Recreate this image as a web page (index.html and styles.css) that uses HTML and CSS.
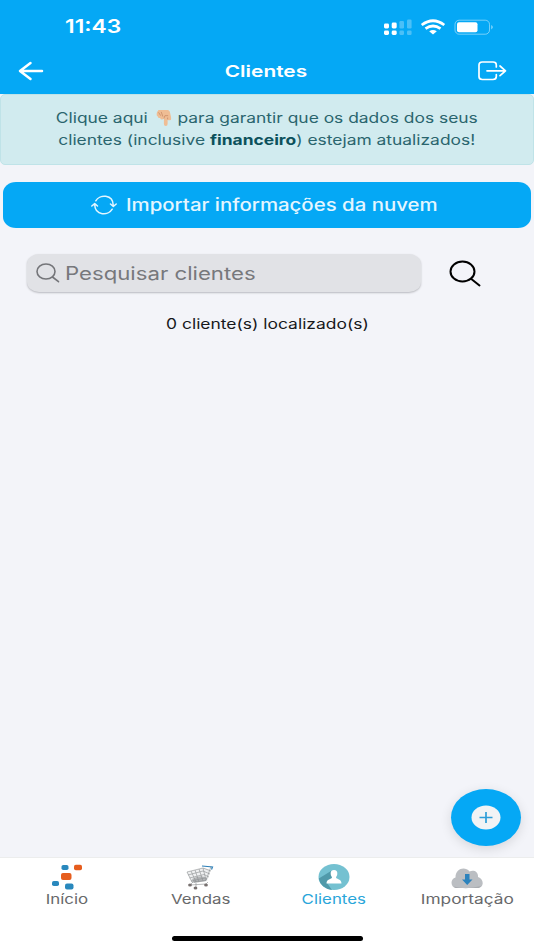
FILE: index.html
```html
<!DOCTYPE html>
<html lang="pt-BR">
<head>
<meta charset="utf-8">
<title>Clientes</title>
<link rel="stylesheet" href="styles.css">
</head>
<body>
<div class="app">
  <header class="top">
    <div class="status">
      <span class="time"><span class="wide w-time">11:43</span></span>
      <svg class="signals" width="112" height="20" viewBox="0 0 112 20" fill="none">
        <g fill="#fff"><rect x="1" y="6.500" width="5" height="5" rx="1.400"/><rect x="8.700" y="5.500" width="5" height="6" rx="1.400"/><rect x="1" y="13.500" width="5" height="4.500" rx="1.400"/><rect x="8.700" y="13.500" width="5" height="4.500" rx="1.400"/></g>
        <g fill="#fff" opacity=".28"><rect x="16.400" y="4" width="4.600" height="7.500" rx="1.200"/><rect x="24" y="2.500" width="4.600" height="9" rx="1.200"/><rect x="16.400" y="13.500" width="4.600" height="4.500" rx="1.200"/><rect x="24" y="13.500" width="4.600" height="4.500" rx="1.200"/></g>
        <g stroke="#fff" stroke-width="2.700"><path d="M38.700 8Q50 -.5 61.300 8M42.500 11.700Q50 6.300 57.500 11.700"/></g>
        <path d="M46.200 14.300Q50 11.700 53.800 14.300L50 17.500Z" fill="#fff"/>
        <rect x="72" y="3.200" width="34.500" height="14" rx="4.200" stroke="#fff" stroke-opacity=".45"/>
        <rect x="74" y="5.200" width="20.500" height="10" rx="2" fill="#fff"/>
        <path d="M108.200 8Q111.500 10.200 108.200 12.500Z" fill="#fff" opacity=".5"/>
      </svg>
    </div>
    <div class="nav">
      <svg width="26" height="20" viewBox="0 0 26 20" fill="none" stroke="#fff" stroke-width="2.500" stroke-linecap="round" stroke-linejoin="round"><path d="M12.500 2L2 10L12.500 18M2.500 10H24"/></svg>
      <h1><span class="wide w-title">Clientes</span></h1>
      <svg width="29" height="20" viewBox="0 0 29 20" fill="none" stroke="#fff" stroke-width="1.700" stroke-linecap="round" stroke-linejoin="round"><path d="M18.300 6V4Q18.300 1 15 1H4.300Q1 1 1 4V15.500Q1 18.500 4.300 18.500H15Q18.300 18.500 18.300 15.500V13.500M9 9.800H27.500M22 5L27.500 9.800L22 14.600"/></svg>
    </div>
  </header>

  <div class="alert">
    <p><span class="wide w-line1">Clique aqui <svg class="hand" width="12" height="16" viewBox="0 0 14 17" preserveAspectRatio="none"><path d="M2 0H11Q13 1 13 4L14 9Q14 11 12 11Q11 11 10.500 10V15Q10.500 17 8.800 17Q7 17 7 15V9L5.500 10Q4 10.500 3.500 8.500Q1.500 9 1.300 7Q-.3 6 0 4Q.3 2 2 0Z" fill="#efbd94"/><path d="M2 2.500L4 6M4.500 2L6 7M7 9L8 6L11 6M10.500 10V8" fill="none" stroke="#c98c68" stroke-width=".8"/></svg> para garantir que os dados dos seus</span></p>
    <p><span class="wide w-line2">clientes (inclusive <b>financeiro</b>) estejam atualizados!</span></p>
  </div>

  <div class="import">
    <svg width="26" height="20" viewBox="0 0 26 20" fill="none" stroke="#e4f6ff" stroke-width="1.500" stroke-linecap="round" stroke-linejoin="round"><path d="M4.800 5.800C8.500 -.8 22 -1 22.300 10.500M19.500 9L22.300 11.500L25.200 9M21.200 14.200C17.500 20.800 4 21 3.700 9.500M.8 11L3.700 8.500L6.500 11"/></svg>
    <span class="label"><span class="wide w-import">Importar informações da nuvem</span></span>
  </div>

  <div class="search">
    <div class="field">
      <svg width="24" height="20" viewBox="0 0 24 20" fill="none" stroke="#747579" stroke-width="1.600" stroke-linecap="round"><ellipse cx="10" cy="8.500" rx="9" ry="7.500"/><path d="M16.500 14L22.500 18.700"/></svg>
      <span class="wide w-search">Pesquisar clientes</span>
    </div>
    <svg class="go" width="32" height="27" viewBox="0 0 32 27" fill="none" stroke="#000" stroke-width="2" stroke-linecap="round"><ellipse cx="13.500" cy="11.500" rx="12" ry="10"/><path d="M22 18.700L30.500 25.500"/></svg>
  </div>

  <p class="count"><span class="wide w-count">0 cliente(s) localizado(s)</span></p>

  <main class="list"></main>

  <div class="fab">
    <svg width="30" height="25" viewBox="0 0 30 25"><ellipse cx="15" cy="12.500" rx="14.500" ry="12" fill="#f1f3f5"/><path d="M8.500 12.500H21.500M15 7V18" stroke="#2d9dd8" stroke-width="1.700"/></svg>
  </div>

  <nav class="tabs">
    <div class="tab">
      <svg width="32" height="26" viewBox="0 0 32 26"><g fill="#2988bd"><rect x="10.500" y="1" width="7" height="5" rx="1.800"/><rect x="1" y="17" width="7" height="5" rx="1.800"/><rect x="14" y="19.500" width="8.500" height="6" rx="2"/></g><g fill="#e65d1d"><rect x="23" y=".8" width="8" height="5.500" rx="1.800"/><rect x="10" y="9" width="10.500" height="7" rx="2"/></g></svg>
      <span class="wide w-tab">Início</span>
    </div>
    <div class="tab">
      <svg width="28" height="26" viewBox="0 0 28 26" fill="none"><path d="M1 8L18 4L25 6L21 17L6 19Z" fill="#eeeff0"/><path d="M6 15Q14 10 21 14L20 17L8 19Z" fill="#b4b6b8"/><path d="M1 8L17 4L25 7M2 11L17 7L24 10M3.500 14L18 10.500L23 13M5 17L19 14M1 8L6 18L20 16.500L25 2.500M5 7L10 18M9 6L13 18M13 5L17 17M17 4L20 16M7 18L4 21L20 20L22 18M10 19L10 23" stroke="#8c8e90" stroke-width=".6"/><path d="M16 2L26.500 3L25.500 5.500" stroke="#2f80b8" stroke-width="1.200"/><g fill="#77706f"><ellipse cx="4" cy="21" rx="1.900" ry="1.600"/><ellipse cx="9.500" cy="24" rx="1.900" ry="1.600"/><ellipse cx="20" cy="21" rx="1.900" ry="1.600"/></g></svg>
      <span class="wide w-tab">Vendas</span>
    </div>
    <div class="tab active">
      <svg width="32" height="26" viewBox="0 0 32 26"><ellipse cx="16" cy="13" rx="15.500" ry="13" fill="#74c1d1"/><path d="M13 7L.8 14.500Q2.500 24 14 26L9 19L14 14Z" fill="#509aaa"/><path d="M16 6C18.200 6 19.600 7.600 19.300 10C19.200 11.800 18.200 12.500 18 13.500C18.500 15.500 23.500 14.500 23.500 19.500H8.500C8.500 14.500 13.500 15.500 14 13.500C13.800 12.500 12.800 11.800 12.700 10C12.400 7.600 13.800 6 16 6Z" fill="#fff"/></svg>
      <span class="wide w-tab">Clientes</span>
    </div>
    <div class="tab">
      <svg width="32" height="26" viewBox="0 0 32 26"><path d="M5 24C-1 23 -.8 14.500 4.500 13.500C4.500 4.500 14 2 18.500 7.500C23 5.500 27.500 8 27 13C33.500 15 33 24 27 24Z" fill="#bbbec2"/><path d="M3 22.500Q15 26 30 22C29 23.500 28 24 27 24H5Q4 24 3 22.500Z" fill="#a9acb0"/><path d="M14 10H18.500V15.500H21.500L16.200 21L11 15.500H14Z" fill="#2c83bd"/></svg>
      <span class="wide w-importacao">Importação</span>
    </div>
  </nav>
  <div class="home"><div class="bar"></div></div>
</div>
</body>
</html>
```
FILE: styles.css
```css
* { box-sizing: border-box; }
body { margin: 0; font-family: Inter, "Liberation Sans", sans-serif; }
h1, p { margin: 0; }
svg { display: block; flex: none; }
.app { width: 534px; height: 950px; display: flex; flex-direction: column; background: #f3f4f9; position: relative; overflow: hidden; }
.wide { display: inline-block; white-space: nowrap; transform: scaleX(1.2); }
.w-title { transform: scaleX(1.29); }
.w-line1, .w-line2 { transform: scaleX(1.243); }
.w-search { transform: scaleX(1.232); }
.w-count { transform: scaleX(1.245); }
.w-tab { transform: scaleX(1.25); }
.w-importacao { transform: scaleX(1.28); }

.top { height: 94px; background: #05a8f5; color: #fff; flex: none; }
.status { height: 50px; display: flex; justify-content: space-between; align-items: center; padding: 3px 39px 0 65px; }
.time { font-size: 19px; font-weight: 600; line-height: 24px; }
.time .wide { transform-origin: left; }
.nav { height: 42px; display: flex; justify-content: space-between; align-items: center; padding: 0 27px 0 18px; }
h1 { font-size: 16.200px; font-weight: 600; line-height: 20px; position: relative; left: 5px; }

.alert { height: 71px; padding: 11px 0; border: 1px solid #bfe3e8; border-radius: 5px; background: #d1ebef; color: #2a656e; font-size: 14px; line-height: 23px; text-align: center; flex: none; }
.alert b { color: #0c515c; font-weight: 700; }
.alert p + p { margin-top: -1px; }
.hand { display: inline-block; vertical-align: -3px; margin: 0 1px 0 3px; }

.import { height: 46px; margin: 17px 3px 0; padding-right: 7px; border-radius: 13px / 11px; background: #05a8f5; color: #e4f6ff; display: flex; align-items: center; justify-content: center; gap: 9px; font-size: 17px; font-weight: 500; flex: none; }
.label { width: 311px; }
.label .wide { transform-origin: left; }

.search { display: flex; align-items: center; margin: 26px 53px 0 27px; justify-content: space-between; flex: none; }
.field { width: 394px; height: 38px; padding-left: 9px; border-radius: 12px / 10px; background: #e1e2e6; box-shadow: 0 1px 2px #b8b9bf; display: flex; align-items: center; gap: 5px; color: #77787c; font-size: 18px; }
.field .wide { transform-origin: left; }

.count { margin-top: 21px; text-align: center; font-size: 14px; line-height: 22px; color: #17181b; }
.list { flex: 1; }

.fab { position: absolute; left: 451px; top: 789px; width: 70px; height: 57px; border-radius: 50%; background: #05a8f5; display: flex; align-items: center; justify-content: center; box-shadow: 0 3px 12px #0000001f; }

.tabs { height: 66px; padding-top: 6px; background: #fff; border-top: 1px solid #eceded; display: grid; grid-template-columns: repeat(4, 1fr); color: #68696b; font-size: 13.500px; line-height: 18px; flex: none; }
.tab { display: flex; flex-direction: column; align-items: center; }
.active { color: #2aa6da; }
.home { height: 27px; background: #fff; display: flex; justify-content: center; padding-top: 13px; flex: none; }
.bar { width: 191px; height: 5px; border-radius: 3px; background: #000; }
```
